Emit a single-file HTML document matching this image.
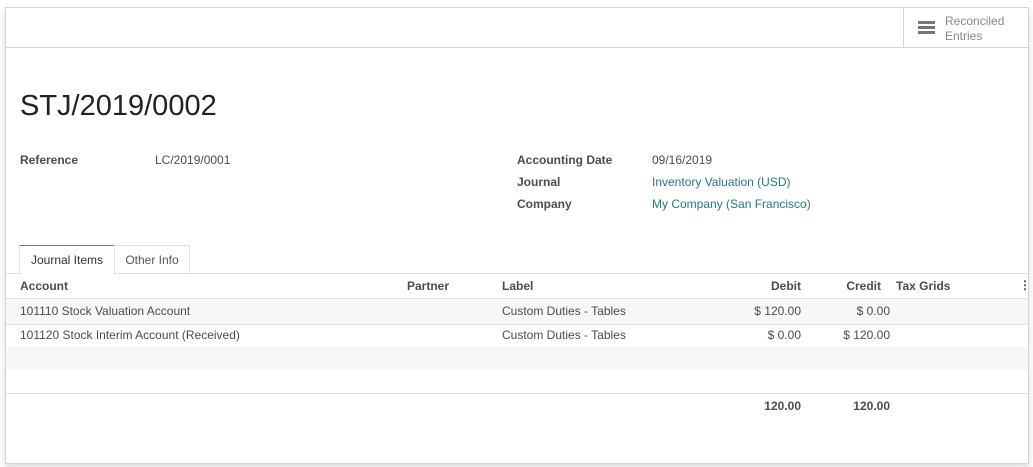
<!DOCTYPE html>
<html><head><style>
body{margin:0;width:1033px;height:467px;background:#fff;font-family:"Liberation Sans",sans-serif;font-size:12px;color:#4c4c4c;position:relative;overflow:hidden}
.sheet{position:absolute;left:5px;top:7px;width:1022px;height:455px;border:1px solid #d5d5d8;box-shadow:0 3px 6px rgba(0,0,0,.15);background:#fff}
.a{position:absolute;white-space:nowrap}
.b{font-weight:bold;color:#4c4c4c}
.lnk{color:#217a7f}
.hl{position:absolute;left:0;right:0;height:1px;background:#dee2e6}
.r{text-align:right}
</style></head><body>
<div class="sheet">
 <div class="hl" style="top:39px;background:#d5d5d8"></div>
 <div class="a" style="left:897px;top:0;width:1px;height:39px;background:#d5d5d8"></div>
 <div class="a" style="left:912px;top:13px;width:17px;height:3px;background:#777;box-shadow:0 5px 0 #777,0 10px 0 #777"></div>
 <div class="a" style="left:939px;top:6px;color:#888;line-height:15px">Reconciled<br>Entries</div>
 <div class="a" style="left:14px;top:82px;font-size:29px;color:#222">STJ/2019/0002</div>
 <div class="a b" style="left:14px;top:145px">Reference</div>
 <div class="a" style="left:149px;top:145px">LC/2019/0001</div>
 <div class="a b" style="left:511px;top:145px">Accounting Date</div>
 <div class="a" style="left:646px;top:145px">09/16/2019</div>
 <div class="a b" style="left:511px;top:167px">Journal</div>
 <div class="a lnk" style="left:646px;top:167px">Inventory Valuation (USD)</div>
 <div class="a b" style="left:511px;top:189px">Company</div>
 <div class="a lnk" style="left:646px;top:189px">My Company (San Francisco)</div>
 <div class="hl" style="top:265px"></div>
 <div class="a" style="left:13px;top:237px;width:94px;height:29px;border:1px solid #dee2e6;border-top-color:#7c6f7b;border-bottom:none;background:#fff;text-align:center;line-height:29px;color:#333">Journal Items</div>
 <div class="a" style="left:108px;top:237px;width:74px;height:27px;border:1px solid #dee2e6;border-bottom:none;text-align:center;line-height:28px;color:#555">Other Info</div>
 <div class="a b" style="left:14px;top:271px">Account</div>
 <div class="a b" style="left:401px;top:271px">Partner</div>
 <div class="a b" style="left:496px;top:271px">Label</div>
 <div class="a b r" style="left:700px;width:95px;top:271px">Debit</div>
 <div class="a b r" style="left:780px;width:95px;top:271px">Credit</div>
 <div class="a b" style="left:890px;top:271px">Tax Grids</div>
 <div class="a b" style="left:1013px;top:270px">⋮</div>
 <div class="a" style="left:0;right:0;top:290px;height:25px;background:#f7f7f7;border-top:1px solid #dee2e6;border-bottom:1px solid #dee2e6"></div>
 <div class="a" style="left:14px;top:296px">101110 Stock Valuation Account</div>
 <div class="a" style="left:496px;top:296px">Custom Duties - Tables</div>
 <div class="a r" style="left:700px;width:95px;top:296px">$ 120.00</div>
 <div class="a r" style="left:780px;width:104px;top:296px">$ 0.00</div>
 <div class="a" style="left:14px;top:320px">101120 Stock Interim Account (Received)</div>
 <div class="a" style="left:496px;top:320px">Custom Duties - Tables</div>
 <div class="a r" style="left:700px;width:95px;top:320px">$ 0.00</div>
 <div class="a r" style="left:780px;width:104px;top:320px">$ 120.00</div>
 <div class="a" style="left:0;right:0;top:339px;height:23px;background:#f7f7f7"></div>
 <div class="hl" style="top:385px"></div>
 <div class="a b r" style="left:700px;width:95px;top:391px">120.00</div>
 <div class="a b r" style="left:780px;width:104px;top:391px">120.00</div>
</div>
</body></html>
